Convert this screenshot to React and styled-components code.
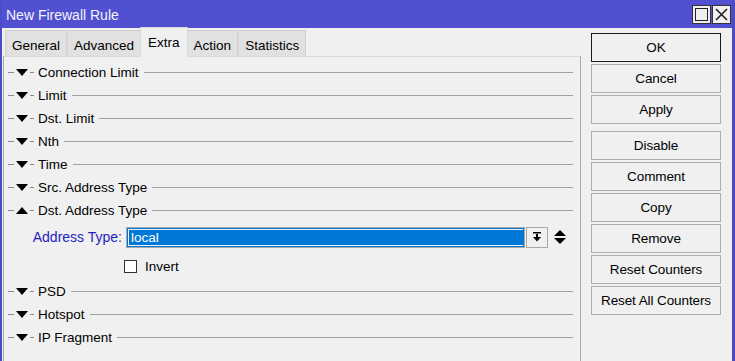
import React from 'react'
import styled, { createGlobalStyle } from 'styled-components'

const Global = createGlobalStyle`
  html, body {
    margin: 0;
    padding: 0;
    background: #f0f0f0;
    font-family: "Liberation Sans", Arial, sans-serif;
    font-size: 13.5px;
    color: #000;
  }
`

const Window = styled.div`
  width: 735px;
  height: 361px;
  box-sizing: border-box;
  border-left: 2px solid #4b4bc8;
  border-right: 3px solid #4b4bc8;
  background: #f0f0f0;
  display: flex;
  flex-direction: column;
  overflow: hidden;
`

const TitleBar = styled.div`
  height: 28px;
  flex: none;
  background: #5050d0;
  display: flex;
  align-items: center;
  padding-left: 4px;
  color: #f4f4ff;
  font-size: 14px;
`

const Title = styled.div`
  flex: 1;
  padding-top: 2px;
`

const WinButtons = styled.div`
  display: flex;
  gap: 1px;
  margin-right: 1px;
`

const WinButton = styled.div`
  width: 19px;
  height: 19px;
  background: #f0f0f0;
  border: 1px solid #333;
  box-sizing: border-box;
  display: flex;
  align-items: center;
  justify-content: center;
`

const Body = styled.div`
  flex: 1;
  display: flex;
  min-height: 0;
`

const Main = styled.div`
  width: 578px;
  flex: none;
  display: flex;
  flex-direction: column;
  padding-left: 1px;
`

const Tabs = styled.div`
  display: flex;
  height: 29px;
  align-items: flex-end;
  padding-left: 2px;
  margin-bottom: -1px;
  position: relative;
  z-index: 1;
`

const Tab = styled.div`
  height: ${(p) => (p.$active ? '30px' : '27px')};
  box-sizing: border-box;
  padding: 0 ${(p) => (p.$active ? '7px' : '6px')};
  display: flex;
  align-items: center;
  padding-top: ${(p) => (p.$active ? '0' : '3px')};
  background: ${(p) => (p.$active ? '#f0f0f0' : '#e1e1e1')};
  border: 1px solid ${(p) => (p.$active ? '#d9d9d9' : '#d0d0d0')};
  border-bottom: ${(p) => (p.$active ? 'none' : '1px solid #d9d9d9')};
  margin-left: ${(p) => (p.$active ? '-1px' : '0')};
  margin-right: ${(p) => (p.$active ? '-1px' : '0')};
  & + & {
    border-left: ${(p) => (p.$active ? '1px solid #d9d9d9' : 'none')};
  }
`

const Panel = styled.div`
  flex: 1;
  border: 1px solid #a8a8a8;
  border-bottom: none;
  border-top-color: #d9d9d9;
  padding: 4px 0 0 4px;
  display: flex;
  flex-direction: column;
`

const Section = styled.div`
  height: 23px;
  display: flex;
  align-items: center;
  padding-right: 7px;
  margin-top: ${(p) => p.$mt || 0}px;
`

const Dash = styled.div`
  width: ${(p) => p.$w}px;
  height: 1px;
  background: #8a8a8a;
  flex: none;
`

const Label = styled.span`
  padding: 0 5px 0 4px;
  white-space: nowrap;
`

const Rule = styled.div`
  flex: 1;
  height: 1px;
  background: #a0a0a0;
`

const FieldRow = styled.div`
  display: flex;
  align-items: center;
  height: 22px;
  margin-top: ${(p) => p.$mt || 0}px;
`

const FieldLabel = styled.div`
  width: 118px;
  text-align: right;
  color: #1f1fc0;
  padding-right: 4px;
  box-sizing: border-box;
  font-size: 14px;
`

const Input = styled.div`
  width: 399px;
  height: 21px;
  box-sizing: border-box;
  border: 1px solid #a8a8a8;
  background: #0078d7;
  padding: 1px;
  display: flex;
  align-items: stretch;
`

const InputInner = styled.div`
  flex: 1;
  border: 1px solid #f0f0f0;
  border-right: none;
  color: #fff;
  padding-left: 2px;
  display: flex;
  align-items: center;
`

const DropBtn = styled.div`
  width: 22px;
  height: 21px;
  box-sizing: border-box;
  border: 1px solid #a8a8a8;
  margin-left: 1px;
  background: #f0f0f0;
  display: flex;
  align-items: center;
  justify-content: center;
`

const Spinner = styled.div`
  margin-left: 6px;
  display: flex;
  align-items: center;
`

const CheckRow = styled.div`
  display: flex;
  align-items: center;
  height: 22px;
  margin-top: ${(p) => p.$mt || 0}px;
  padding-left: 116px;
`

const Box = styled.div`
  width: 13px;
  height: 13px;
  box-sizing: border-box;
  border: 1px solid #333;
  background: #fff;
  margin-right: 8px;
`

const Side = styled.div`
  flex: 1;
  display: flex;
  flex-direction: column;
  padding: 5px 0 0 10px;
`

const Button = styled.div`
  width: 130px;
  height: 29px;
  box-sizing: border-box;
  border: 1px solid ${(p) => (p.$default ? '#1a1a1a' : '#adadad')};
  background: #f0f0f0;
  display: flex;
  align-items: center;
  justify-content: center;
  margin-top: ${(p) => p.$mt ?? 2}px;
  letter-spacing: -0.1px;
`

const Triangle = ({ up }) => (
  <svg width="12" height="7" viewBox="0 0 12 7">
    <polygon points={up ? '0,7 12,7 6,0' : '0,0 12,0 6,7'} fill="#000" />
  </svg>
)

const Gap = styled.span`
  width: 2px;
  flex: none;
`

const SectionRow = ({ label, up, mt }) => (
  <Section $mt={mt}>
    <Dash $w={6} />
    <Gap />
    <Triangle up={up} />
    <Gap />
    <Dash $w={4} />
    <Label>{label}</Label>
    <Rule />
  </Section>
)

const tabs = ['General', 'Advanced', 'Extra', 'Action', 'Statistics']
const before = ['Connection Limit', 'Limit', 'Dst. Limit', 'Nth', 'Time', 'Src. Address Type']
const after = ['Hotspot', 'IP Fragment']

export default function App() {
  return (
    <Window>
      <Global />
      <TitleBar>
        <Title>New Firewall Rule</Title>
        <WinButtons>
          <WinButton>
            <svg width="13" height="13" viewBox="0 0 13 13">
              <rect x="0.5" y="0.5" width="12" height="12" fill="none" stroke="#222" />
            </svg>
          </WinButton>
          <WinButton>
            <svg width="13" height="13" viewBox="0 0 13 13">
              <path d="M1 1 L12 12 M12 1 L1 12" stroke="#222" strokeWidth="1.6" />
            </svg>
          </WinButton>
        </WinButtons>
      </TitleBar>
      <Body>
        <Main>
          <Tabs>
            {tabs.map((t) => (
              <Tab key={t} $active={t === 'Extra'}>
                {t}
              </Tab>
            ))}
          </Tabs>
          <Panel>
            {before.map((l) => (
              <SectionRow key={l} label={l} />
            ))}
            <SectionRow label="Dst. Address Type" up />
            <FieldRow $mt={4}>
              <FieldLabel>Address Type:</FieldLabel>
              <Input>
                <InputInner>local</InputInner>
              </Input>
              <DropBtn>
                <svg width="10" height="10" viewBox="0 0 10 10">
                  <rect x="1" y="0" width="8" height="1.5" fill="#000" />
                  <rect x="4" y="2" width="2" height="4" fill="#000" />
                  <polygon points="1,5 9,5 5,9.5" fill="#000" />
                </svg>
              </DropBtn>
              <Spinner>
                <svg width="12" height="14" viewBox="0 0 12 14">
                  <polygon points="0,6 12,6 6,0" fill="#000" />
                  <polygon points="0,8 12,8 6,14" fill="#000" />
                </svg>
              </Spinner>
            </FieldRow>
            <CheckRow $mt={7}>
              <Box />
              Invert
            </CheckRow>
            <SectionRow label="PSD" mt={3} />
            {after.map((l) => (
              <SectionRow key={l} label={l} />
            ))}
          </Panel>
        </Main>
        <Side>
          <Button $default $mt={0}>OK</Button>
          <Button>Cancel</Button>
          <Button>Apply</Button>
          <Button $mt={7}>Disable</Button>
          <Button>Comment</Button>
          <Button>Copy</Button>
          <Button>Remove</Button>
          <Button>Reset Counters</Button>
          <Button>Reset All Counters</Button>
        </Side>
      </Body>
    </Window>
  )
}
